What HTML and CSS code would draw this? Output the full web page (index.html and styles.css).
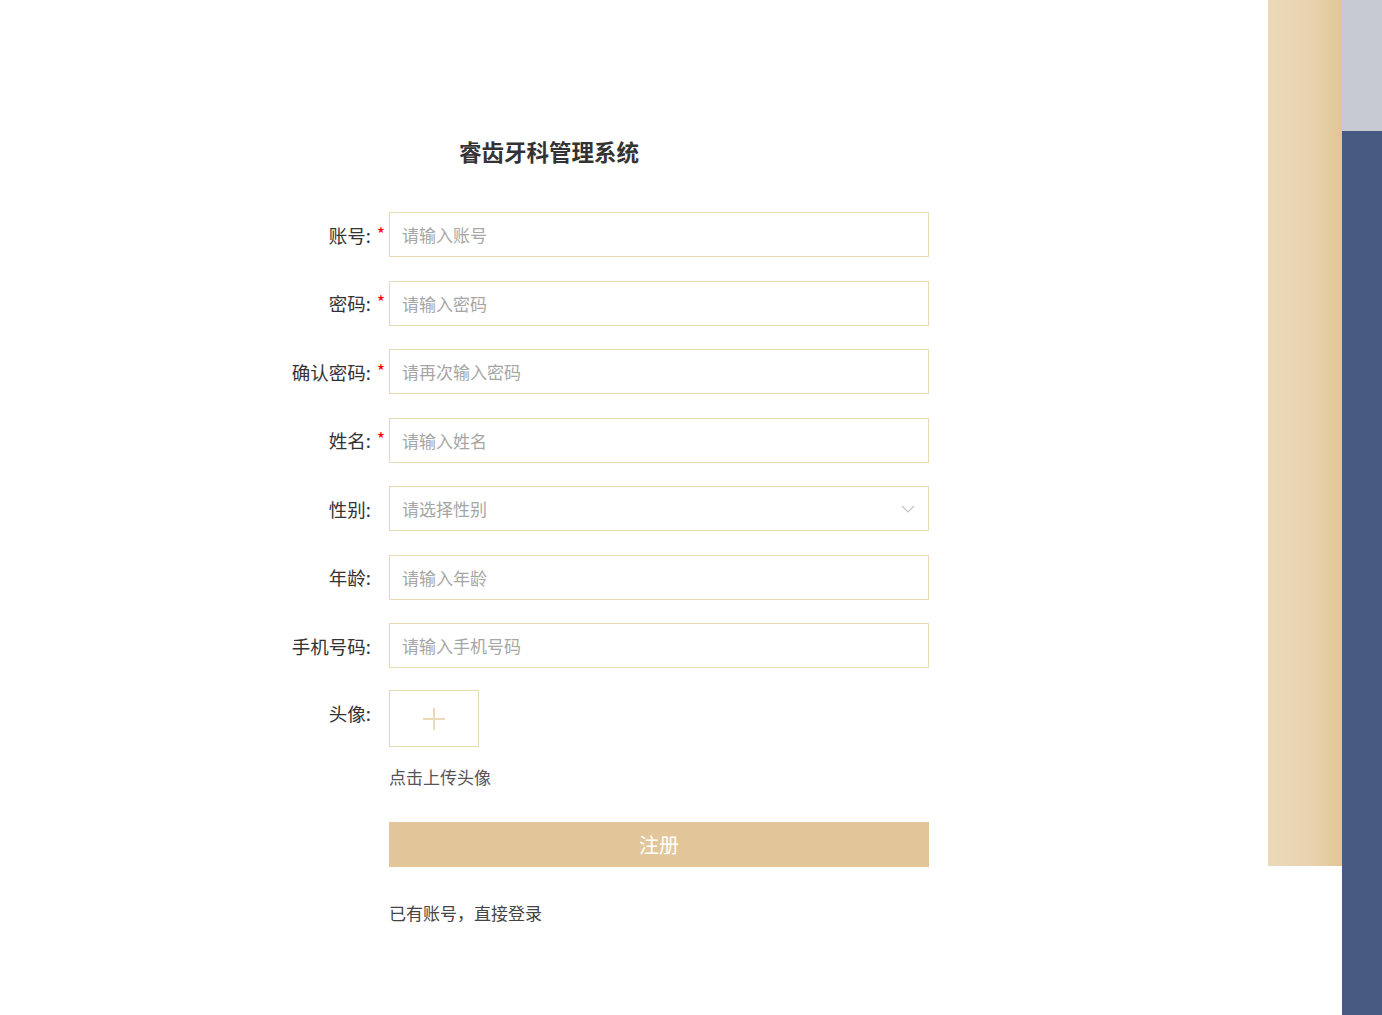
FILE: index.html
```html
<!DOCTYPE html>
<html lang="zh-CN">
<head>
    <meta charset="UTF-8">
    <meta name="viewport" content="width=device-width, initial-scale=1.0">
    <title>睿齿牙科管理系统 - 注册</title>
    <link rel="stylesheet" href="styles.css">
</head>
<body>
    <div class="page">
        <div class="main">
            <div class="register">
                <h2 class="title">睿齿牙科管理系统</h2>

                <div class="form-row">
                    <label class="form-label">账号:<span class="req">*</span></label>
                    <input class="form-input" type="text" placeholder="请输入账号">
                </div>
                <div class="form-row">
                    <label class="form-label">密码:<span class="req">*</span></label>
                    <input class="form-input" type="password" placeholder="请输入密码">
                </div>
                <div class="form-row">
                    <label class="form-label">确认密码:<span class="req">*</span></label>
                    <input class="form-input" type="password" placeholder="请再次输入密码">
                </div>
                <div class="form-row">
                    <label class="form-label">姓名:<span class="req">*</span></label>
                    <input class="form-input" type="text" placeholder="请输入姓名">
                </div>
                <div class="form-row">
                    <label class="form-label">性别:<span class="req hidden">*</span></label>
                    <div class="select-box">
                        <input class="form-input" type="text" placeholder="请选择性别" readonly>
                        <svg class="select-arrow" width="14" height="8" viewBox="0 0 14 8">
                            <polyline points="1,1 7,7 13,1" fill="none" stroke="#c0c4cc" stroke-width="1.2"/>
                        </svg>
                    </div>
                </div>
                <div class="form-row">
                    <label class="form-label">年龄:<span class="req hidden">*</span></label>
                    <input class="form-input" type="text" placeholder="请输入年龄">
                </div>
                <div class="form-row last-input">
                    <label class="form-label">手机号码:<span class="req hidden">*</span></label>
                    <input class="form-input" type="text" placeholder="请输入手机号码">
                </div>
                <div class="form-row upload-row">
                    <label class="form-label">头像:<span class="req hidden">*</span></label>
                    <div class="upload-col">
                        <div class="upload-box">
                            <svg width="24" height="24" viewBox="0 0 24 24">
                                <line x1="12" y1="1" x2="12" y2="23" stroke="#ebd9b8" stroke-width="2"/>
                                <line x1="1" y1="12" x2="23" y2="12" stroke="#ebd9b8" stroke-width="2"/>
                            </svg>
                        </div>
                        <div class="upload-tip">点击上传头像</div>
                    </div>
                </div>

                <div class="form-row">
                    <span class="form-label"></span>
                    <button class="submit-btn">注册</button>
                </div>
                <div class="form-row">
                    <span class="form-label"></span>
                    <a class="login-link" href="#">已有账号，直接登录</a>
                </div>
            </div>
        </div>
        <div class="side-beige"></div>
        <div class="side-strip">
            <div class="strip-top"></div>
            <div class="strip-bottom"></div>
        </div>
    </div>
</body>
</html>
```

FILE: styles.css
```css
body {
    margin: 0;
    font-family: "Noto Sans CJK SC", "Liberation Sans", sans-serif;
    background-color: #fff;
    color: #333;
}
.page {
    display: flex;
    height: 1015px;
    overflow: hidden;
}
.main {
    flex: 1;
}
.register {
    margin-left: 280px;
    padding-top: 135px;
    width: 649px;
}
.title {
    margin: 0 0 45px 0;
    width: 538px;
    text-align: center;
    font-size: 22.5px;
    line-height: 32px;
    font-weight: bold;
    color: #333;
}
.form-row {
    display: flex;
    align-items: center;
    margin-bottom: 23.5px;
}
.form-row.last-input {
    margin-bottom: 22px;
}
.form-label {
    width: 109px;
    flex-shrink: 0;
    box-sizing: border-box;
    padding-right: 2px;
    text-align: right;
    font-size: 18.5px;
    line-height: 22px;
    color: #333;
    white-space: nowrap;
}
.req {
    display: inline-block;
    width: 12px;
    margin-left: 4px;
    color: #f00;
    font-size: 18px;
    line-height: 18px;
    text-align: center;
    vertical-align: top;
}
.req.hidden {
    visibility: hidden;
}
.form-input {
    width: 540px;
    height: 45px;
    box-sizing: border-box;
    border: 1px solid #ebd8b5;
    padding: 0 12px;
    font-family: inherit;
    font-size: 17px;
    color: #333;
    outline: none;
    background: #fff;
}
.form-input::placeholder {
    color: #a6a6a6;
}
.select-box {
    position: relative;
}
.select-arrow {
    position: absolute;
    right: 14px;
    top: 19px;
}
.upload-row {
    align-items: flex-start;
    margin-bottom: 34px;
}
.upload-row .form-label {
    padding-top: 12px;
}
.upload-box {
    width: 90px;
    height: 57px;
    box-sizing: border-box;
    border: 1px solid #ebd8b5;
    display: flex;
    align-items: center;
    justify-content: center;
    cursor: pointer;
}
.upload-tip {
    margin-top: 19px;
    font-size: 17px;
    line-height: 22px;
    color: #555;
}
.submit-btn {
    width: 540px;
    height: 45px;
    border: none;
    background-color: #e2c69a;
    color: #fff;
    font-family: inherit;
    font-size: 20px;
    cursor: pointer;
}
.login-link {
    margin-top: 11px;
    font-size: 17px;
    line-height: 22px;
    color: #444;
    text-decoration: none;
}
.side-beige {
    width: 74px;
    height: 866px;
    flex-shrink: 0;
    background: linear-gradient(90deg, #ebd9ba 0%, #e8d3ae 60%, #e2c595 100%);
}
.side-strip {
    width: 40px;
    flex-shrink: 0;
    display: flex;
    flex-direction: column;
}
.strip-top {
    height: 131px;
    background-color: #c8cad3;
}
.strip-bottom {
    flex: 1;
    background-color: #465a82;
}
```
